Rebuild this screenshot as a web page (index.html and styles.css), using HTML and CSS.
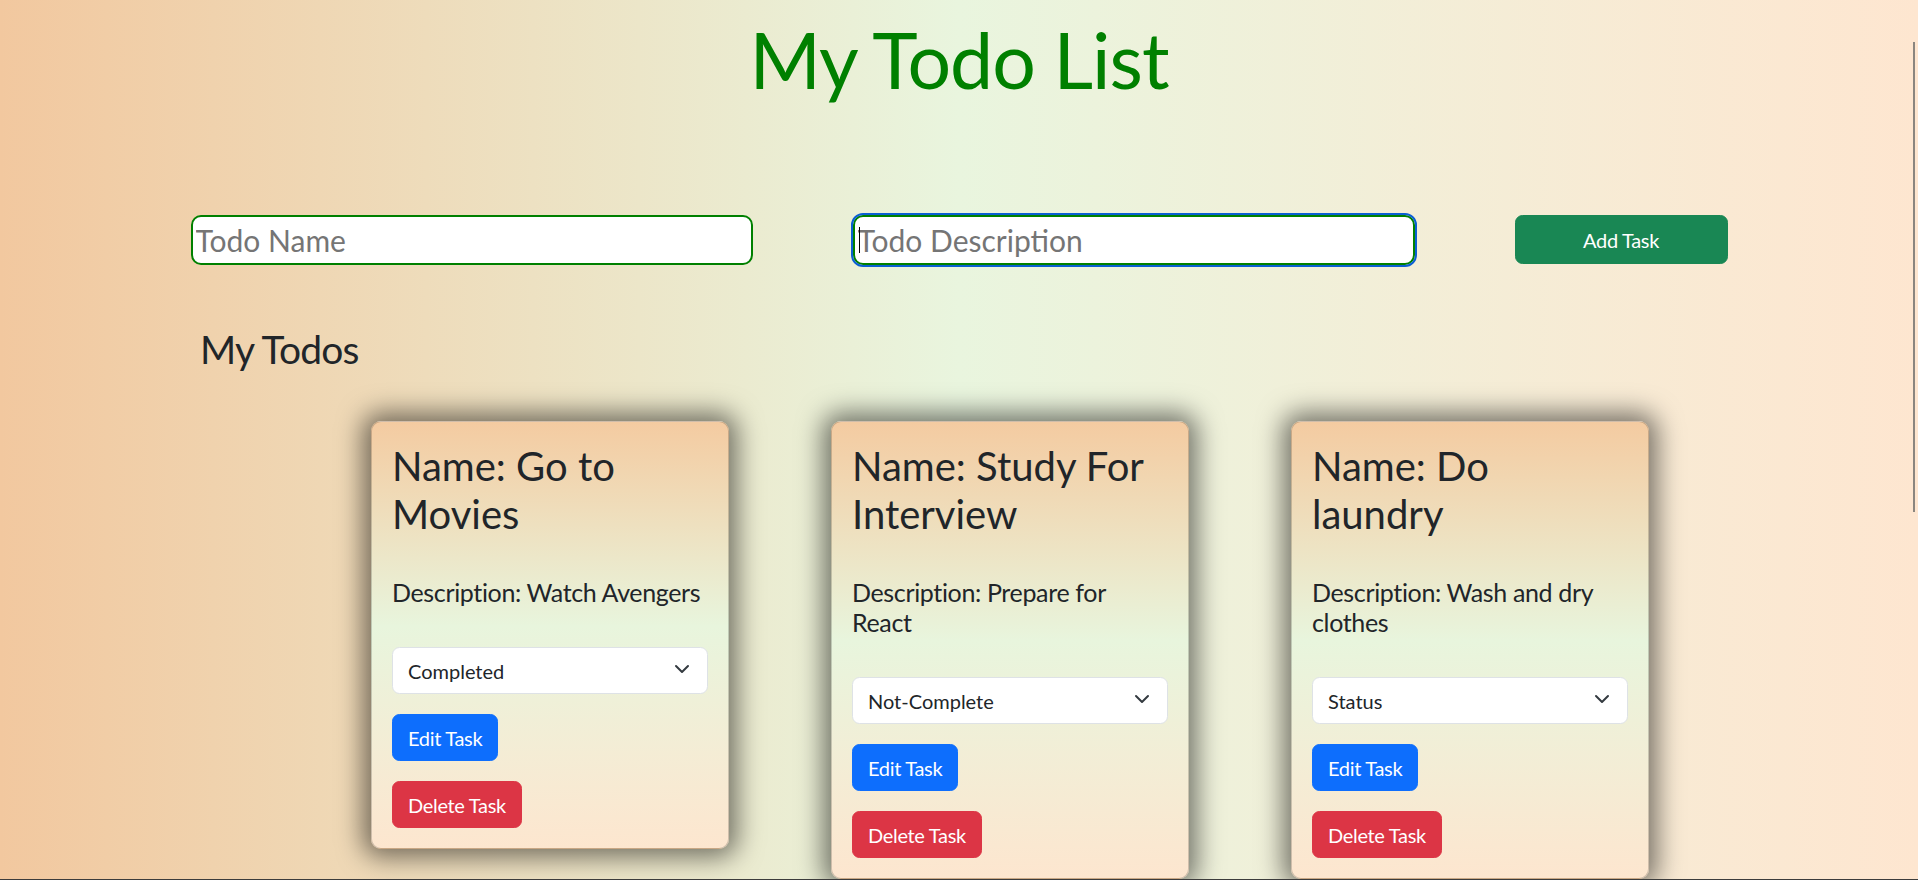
FILE: index.html
```html
<!DOCTYPE html>
<html lang="en">
<head>
<meta charset="utf-8">
<title>My Todo List</title>
<link rel="stylesheet" href="styles.css">
</head>
<body>
<div class="page">
  <h1 class="page-title">My Todo List</h1>
  <form class="add-form">
    <input class="todo-input" type="text" placeholder="Todo Name">
    <div class="field is-focused">
      <input class="todo-input" type="text" placeholder="Todo Description">
      <span class="caret"></span>
    </div>
    <button type="button" class="btn btn-add">Add Task</button>
  </form>
  <h2 class="section-title">My Todos</h2>
  <div class="cards">
    <div class="card">
      <h2 class="card-title">Name: Go to Movies</h2>
      <h5 class="card-desc">Description: Watch Avengers</h5>
      <div class="select-wrap">
        <select class="status-select">
          <option>Status</option>
          <option selected>Completed</option>
          <option>Not-Complete</option>
        </select>
        <svg class="chevron" viewBox="0 0 16 16" width="16" height="16"><path d="m2 5 6 6 6-6" fill="none" stroke="#343a40" stroke-width="2" stroke-linecap="round" stroke-linejoin="round"/></svg>
      </div>
      <button type="button" class="btn btn-edit">Edit Task</button>
      <button type="button" class="btn btn-delete">Delete Task</button>
    </div>
    <div class="card">
      <h2 class="card-title">Name: Study For Interview</h2>
      <h5 class="card-desc">Description: Prepare for React</h5>
      <div class="select-wrap">
        <select class="status-select">
          <option>Status</option>
          <option>Completed</option>
          <option selected>Not-Complete</option>
        </select>
        <svg class="chevron" viewBox="0 0 16 16" width="16" height="16"><path d="m2 5 6 6 6-6" fill="none" stroke="#343a40" stroke-width="2" stroke-linecap="round" stroke-linejoin="round"/></svg>
      </div>
      <button type="button" class="btn btn-edit">Edit Task</button>
      <button type="button" class="btn btn-delete">Delete Task</button>
    </div>
    <div class="card">
      <h2 class="card-title">Name: Do laundry</h2>
      <h5 class="card-desc">Description: Wash and dry clothes</h5>
      <div class="select-wrap">
        <select class="status-select">
          <option selected>Status</option>
          <option>Completed</option>
          <option>Not-Complete</option>
        </select>
        <svg class="chevron" viewBox="0 0 16 16" width="16" height="16"><path d="m2 5 6 6 6-6" fill="none" stroke="#343a40" stroke-width="2" stroke-linecap="round" stroke-linejoin="round"/></svg>
      </div>
      <button type="button" class="btn btn-edit">Edit Task</button>
      <button type="button" class="btn btn-delete">Delete Task</button>
    </div>
  </div>
</div>
<div class="scroll-thumb"></div>
<div class="frame-edge"></div>
</body>
</html>
```

FILE: styles.css
```css
html, body {
  margin: 0;
  height: 100%;
  overflow: hidden;
}

body {
  font-family: Lato, "Open Sans", "Liberation Sans", sans-serif;
  color: #212529;
  background: linear-gradient(to right, #f2c89f 0%, #e9f5de 50%, #fee6d0 100%);
}

.page {
  height: 880px;
}

.page-title {
  margin: 0;
  padding-top: 13px;
  font-size: 77px;
  line-height: 92px;
  font-weight: 400;
  letter-spacing: -0.013em;
  color: #008000;
  text-align: center;
}

.add-form {
  display: flex;
  justify-content: center;
  align-items: flex-start;
  gap: 100px;
  margin: 110px 0 0;
}

.field {
  position: relative;
  display: flex;
}

.todo-input {
  box-sizing: border-box;
  width: 562px;
  height: 50px;
  margin: 0;
  padding: 0 3px;
  border: 2px solid #008000;
  border-radius: 10px;
  background: #fff;
  font-family: inherit;
  font-size: 30px;
  color: #212529;
  outline: none;
}

.todo-input::placeholder {
  color: #757575;
}

.is-focused .todo-input {
  outline: 2px solid #0b5fd3;
  outline-offset: 0;
}

.caret {
  position: absolute;
  left: 6px;
  top: 12px;
  width: 1px;
  height: 26px;
  background: #000;
}

.btn {
  box-sizing: border-box;
  display: block;
  height: 47px;
  margin: 0;
  padding: 0 15px;
  border: 1px solid transparent;
  border-radius: 7.5px;
  font-family: inherit;
  font-size: 20px;
  line-height: 30px;
  letter-spacing: -0.016em;
  color: #fff;
  cursor: pointer;
}

.btn-add {
  width: 213px;
  height: 49px;
  background: #198754;
  border-color: #198754;
}

.btn-edit {
  background: #0d6efd;
  border-color: #0d6efd;
  margin-bottom: 20px;
}

.btn-delete {
  background: #dc3545;
  border-color: #dc3545;
}

.section-title {
  margin: 60px 0 0;
  padding-left: 200px;
  font-size: 39px;
  line-height: 48px;
  font-weight: 400;
  letter-spacing: -0.02em;
}

.cards {
  display: flex;
  align-items: flex-start;
  gap: 102px;
  margin-top: 48px;
  padding-left: 371px;
}

.card {
  box-sizing: border-box;
  width: 358px;
  padding: 20px;
  border: 1px solid rgba(0, 0, 0, 0.175);
  border-radius: 10px;
  background: linear-gradient(to bottom, #f4cba1 0%, #e8f5dd 48%, #fde6cf 100%);
  box-shadow: 0 0 26px 8px rgba(0, 0, 0, 0.52);
}

.card-title {
  margin: 0 0 39px;
  font-size: 40px;
  line-height: 48px;
  font-weight: 400;
}

.card-desc {
  margin: 0 0 40px;
  font-size: 25px;
  line-height: 30px;
  font-weight: 400;
  letter-spacing: -0.014em;
}

.select-wrap {
  position: relative;
  margin-bottom: 20px;
}

.status-select {
  box-sizing: border-box;
  display: block;
  width: 100%;
  height: 47px;
  margin: 0;
  padding: 0 45px 0 15px;
  border: 1px solid #dee2e6;
  border-radius: 7.5px;
  background: #fff;
  font-family: inherit;
  font-size: 20px;
  color: #212529;
  appearance: none;
  -webkit-appearance: none;
}

.chevron {
  position: absolute;
  right: 18px;
  top: 14px;
  pointer-events: none;
}

.scroll-thumb {
  position: fixed;
  right: 3px;
  top: 42px;
  width: 2px;
  height: 470px;
  background: #8b8680;
}

.frame-edge {
  position: fixed;
  left: 0;
  right: 0;
  bottom: 0;
  height: 1px;
  background: #3c3c3c;
}
```
